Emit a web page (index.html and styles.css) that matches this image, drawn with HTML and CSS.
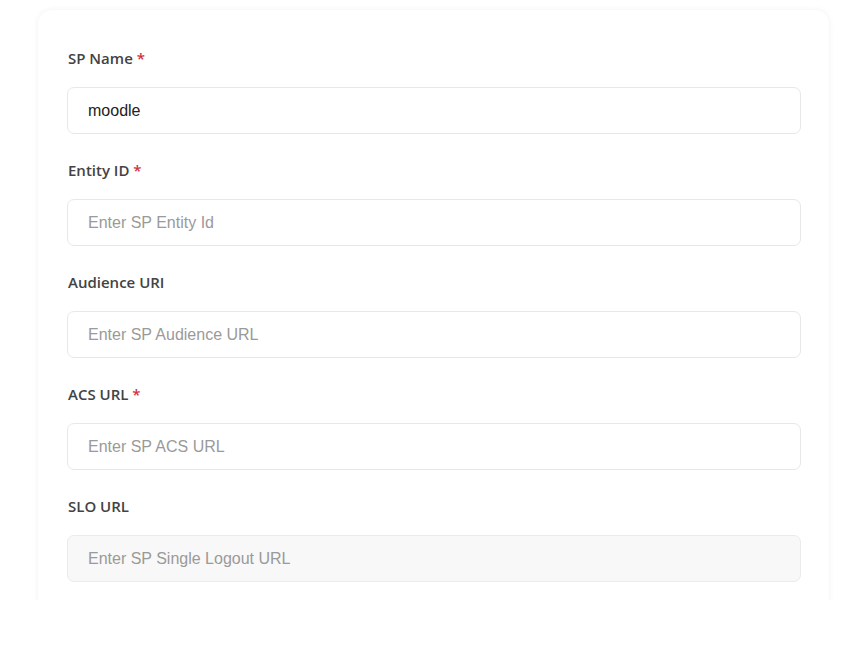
FILE: index.html
```html
<!DOCTYPE html>
<html>
<head>
<meta charset="utf-8">
<link rel="stylesheet" href="styles.css">
</head>
<body>
<div class="viewport">
  <div class="card">
    <div class="field">
      <label class="label">SP Name <span class="req">*</span></label>
      <input class="input" type="text" value="moodle">
    </div>
    <div class="field">
      <label class="label">Entity ID <span class="req">*</span></label>
      <input class="input" type="text" placeholder="Enter SP Entity Id">
    </div>
    <div class="field">
      <label class="label">Audience URI</label>
      <input class="input" type="text" placeholder="Enter SP Audience URL">
    </div>
    <div class="field">
      <label class="label">ACS URL <span class="req">*</span></label>
      <input class="input" type="text" placeholder="Enter SP ACS URL">
    </div>
    <div class="field">
      <label class="label">SLO URL</label>
      <input class="input input-disabled" type="text" placeholder="Enter SP Single Logout URL" disabled>
    </div>
  </div>
</div>
</body>
</html>
```

FILE: styles.css
```css
* { box-sizing: border-box; }
html, body { margin: 0; padding: 0; background: #ffffff; }
body { width: 868px; height: 648px; overflow: hidden; }

.viewport {
  height: 600px;
  overflow: hidden;
  padding: 10px 39px 0 38px;
}

.card {
  background: #ffffff;
  border-radius: 14px;
  box-shadow: 0 0 6px rgba(0, 0, 0, 0.06);
  padding: 38px 28px 60px 29px;
  display: flex;
  flex-direction: column;
  gap: 26px;
}

.field {
  display: flex;
  flex-direction: column;
  gap: 19px;
}

.label {
  font-family: "Open Sans", "Noto Sans", sans-serif;
  font-weight: 600;
  font-size: 15px;
  line-height: 20px;
  color: #434343;
  height: 20px;
  padding-left: 1px;
}

.req { color: #d32f3f; }

.input {
  display: block;
  width: 100%;
  height: 47px;
  border: 1.5px solid #e8e8e8;
  border-radius: 7px;
  background: #ffffff;
  padding: 0 20px;
  font-family: "Liberation Sans", Arial, sans-serif;
  font-size: 16px;
  color: #222222;
  outline: none;
}

.input::placeholder { color: #9a9a9a; opacity: 1; }

.input-disabled {
  background: #f8f8f8;
  border-color: #ebebeb;
}

.input-disabled::placeholder { color: #9a9a9a; }
```
